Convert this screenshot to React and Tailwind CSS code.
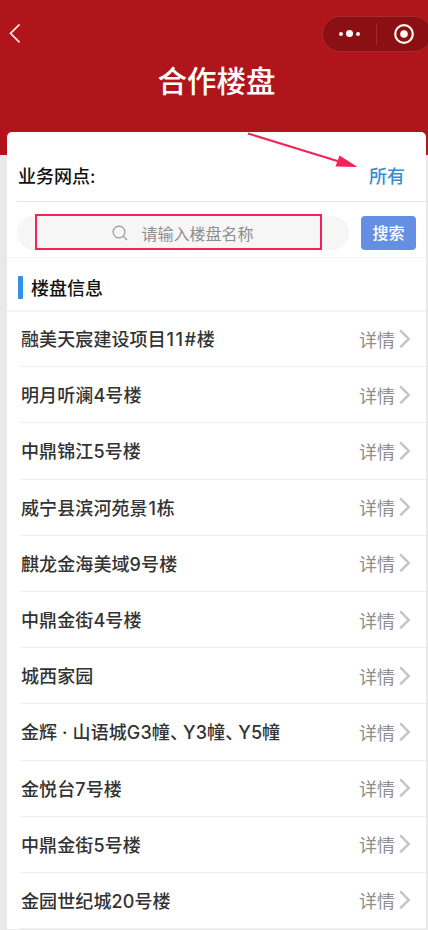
const buildings = [
  '融美天宸建设项目11#楼',
  '明月听澜4号楼',
  '中鼎锦江5号楼',
  '威宁县滨河苑景1栋',
  '麒龙金海美域9号楼',
  '中鼎金街4号楼',
  '城西家园',
  '金辉 · 山语城G3幢、Y3幢、Y5幢',
  '金悦台7号楼',
  '中鼎金街5号楼',
  '金园世纪城20号楼',
]

// narrow glyphs get some room, the comma is set half-width
const glyphSpacing = {
  1: 'mx-[0.7px]',
  '#': 'mx-[0.7px]',
  '、': "mr-[4px] [font-feature-settings:'halt']",
}

function Capsule() {
  return (
    <div className="flex h-9 w-[110px] items-center rounded-full border border-[#a92a2d] bg-[#8b1014]">
      <div className="flex w-[53px] items-center justify-center gap-[3px]">
        <span className="h-1 w-1 rounded-full bg-[#fff3ec]"></span>
        <span className="h-[7px] w-[7px] rounded-full bg-white"></span>
        <span className="h-1 w-1 rounded-full bg-[#fff3ec]"></span>
      </div>
      <span className="h-[22px] w-px bg-[#a22a2c]"></span>
      <svg className="ml-[17px] h-5 w-5" viewBox="0 0 20 20" fill="none">
        <circle cx="10" cy="10" r="8.8" stroke="#fff8f0" strokeWidth="2.2" />
        <circle cx="10" cy="10" r="3.8" fill="#fff8f0" />
      </svg>
    </div>
  )
}

function BuildingName({ name }) {
  return (
    <span className="pt-[2px] text-[18px] tracking-[0.1px] whitespace-pre text-[#333]">
      {name.split(/([1#、])/).filter(Boolean).map((part, i) =>
        glyphSpacing[part] ? (
          <span key={i} className={glyphSpacing[part]}>{part}</span>
        ) : (
          part
        )
      )}
    </span>
  )
}

function BuildingRow({ name }) {
  return (
    <li className="ml-[13px] flex h-[56.2px] items-center justify-between border-b border-[#f0f0f0] pr-[15px] pl-px">
      <BuildingName name={name} />
      <span className="flex items-center text-[18px] font-normal text-[#8e8e8e]">
        <span className="pt-[3px]">详情</span>
        <svg className="ml-1 h-5 w-3" viewBox="0 0 12 20" fill="none">
          <path d="M1.2 1.4L9.8 9.9L1.2 18.4" stroke="#c4c4c4" strokeWidth="2.4" />
        </svg>
      </span>
    </li>
  )
}

export default function App() {
  return (
    <div className="relative h-[930px] w-[428px] overflow-hidden bg-[#e9e9e9] bg-linear-to-b from-[#af151b] from-[155px] to-[#e9e9e9] to-[155px] font-[Inter,'Noto_Sans_CJK_SC',sans-serif] font-medium">
      <header className="h-[132px] text-white">
        <div className="flex h-[67px] items-center justify-between pl-[9px]">
          <svg className="h-5 w-3" viewBox="0 0 12 20" fill="none">
            <path d="M10.5 0.5L1.5 9.3L10.5 18.3" stroke="#ffe9e0" strokeWidth="1.7" />
          </svg>
          <div className="-mr-1">
            <Capsule />
          </div>
        </div>
        <h1 className="pl-[5px] text-center text-[29.5px] leading-[28px] font-medium">合作楼盘</h1>
      </header>

      <main className="mr-[2px] ml-[7px] rounded-t-[5px] bg-white">
        <div className="ml-[10px] flex h-[70px] items-center justify-between border-b border-[#e3e7e7] pt-[20px] pr-[21px] pl-px">
          <span className="text-[18px] text-[#111]">业务网点:</span>
          <span className="text-[18px] text-[#398cd0]">所有</span>
        </div>

        <div className="flex h-14 items-center justify-between border-b border-[#f4f4f4] pt-[7px] pr-[10px] pb-0 pl-[10px]">
          <div className="flex h-[34px] w-[332px] items-center justify-center rounded-full bg-[#f6f6f6]">
            <svg className="mr-[13px] h-4 w-4" viewBox="0 0 16 16" fill="none">
              <circle cx="7" cy="7" r="5.9" stroke="#999" strokeWidth="1.2" />
              <path d="M11.2 11.2L15 15" stroke="#999" strokeWidth="1.2" />
            </svg>
            <span className="pt-px text-[16px] font-normal text-[#8e8e8e]">请输入楼盘名称</span>
          </div>
          <button className="h-[34px] w-[55px] rounded-[4px] bg-[#648fe3] text-[16px] text-white">搜索</button>
        </div>

        <div className="flex h-[54px] items-center border-b-2 border-[#f5f5f5] pt-[6px] pl-[11px]">
          <span className="h-[23px] w-[5px] rounded-[1px] bg-[#3390e8]"></span>
          <h2 className="ml-2 pt-[2px] text-[18px] font-medium text-[#111]">楼盘信息</h2>
        </div>

        <ul className="-mt-px">
          {buildings.map((name) => (
            <BuildingRow key={name} name={name} />
          ))}
        </ul>
      </main>

      {/* callouts: search box frame and arrow to the branch filter */}
      <div className="absolute top-[214px] left-[35px] h-[36px] w-[287px] border-2 border-[#f62155]"></div>
      <svg className="absolute top-[130px] left-[244px] h-[42px] w-[118px]" viewBox="244 130 118 42">
        <path d="M248 133.5L339 161.5" stroke="#f62155" strokeWidth="2" />
        <path d="M339.5 155.5L357.5 167L335.5 166.5Z" fill="#f62155" />
      </svg>
    </div>
  )
}
